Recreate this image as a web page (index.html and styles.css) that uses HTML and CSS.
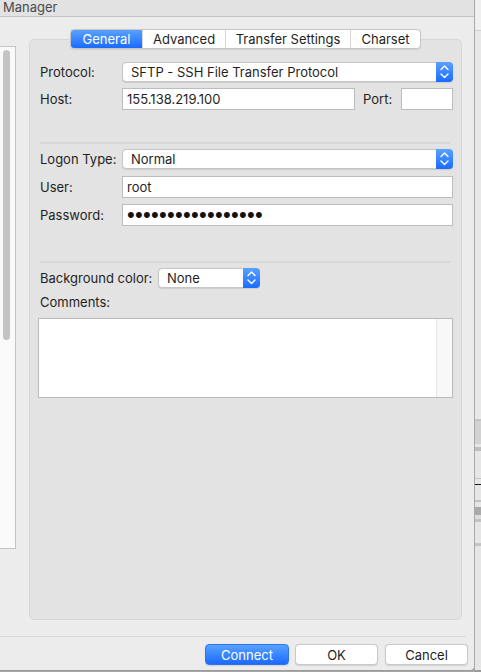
FILE: index.html
```html
<!DOCTYPE html>
<html>
<head>
<meta charset="utf-8">
<link rel="stylesheet" href="styles.css">
</head>
<body>
<div class="screen">
  <div class="window">
    <div class="titlebar">Manager</div>
    <div class="body">
      <div class="sidebar"><div class="thumb"></div></div>
      <div class="main">
        <div class="tabs">
          <span class="tab t-general active">General</span>
          <span class="tab t-advanced">Advanced</span>
          <span class="tab t-transfer">Transfer Settings</span>
          <span class="tab t-charset">Charset</span>
        </div>
        <div class="panel">
          <div class="row">
            <span class="lbl">Protocol:</span>
            <div class="select grow"><span class="sel-text">SFTP - SSH File Transfer Protocol</span><span class="arrows"><svg viewBox="0 0 17 20" width="17" height="20"><path d="M5 7.5 L8.5 4 L12 7.5 M5 12 L8.5 15.5 L12 12" fill="none" stroke="#fff" stroke-width="1.4" stroke-linecap="round" stroke-linejoin="round"/></svg></span></div>
          </div>
          <div class="row host-row">
            <span class="lbl">Host:</span>
            <div class="input host">155.138.219.100</div>
            <span class="port-lbl">Port:</span>
            <div class="input grow"></div>
          </div>
          <div class="sep"></div>
          <div class="row logon-row">
            <span class="lbl">Logon Type:</span>
            <div class="select grow"><span class="sel-text">Normal</span><span class="arrows"><svg viewBox="0 0 17 20" width="17" height="20"><path d="M5 7.5 L8.5 4 L12 7.5 M5 12 L8.5 15.5 L12 12" fill="none" stroke="#fff" stroke-width="1.4" stroke-linecap="round" stroke-linejoin="round"/></svg></span></div>
          </div>
          <div class="row user-row">
            <span class="lbl">User:</span>
            <div class="input grow">root</div>
          </div>
          <div class="row pass-row">
            <span class="lbl">Password:</span>
            <div class="input grow"><span class="dots">•••••••••••••••••</span></div>
          </div>
          <div class="sep sep2"></div>
          <div class="row bg-row">
            <span class="lbl-bg">Background color:</span>
            <div class="select bg-select"><span class="sel-text">None</span><span class="arrows"><svg viewBox="0 0 17 20" width="17" height="20"><path d="M5 7.5 L8.5 4 L12 7.5 M5 12 L8.5 15.5 L12 12" fill="none" stroke="#fff" stroke-width="1.4" stroke-linecap="round" stroke-linejoin="round"/></svg></span></div>
          </div>
          <div class="comments-lbl">Comments:</div>
          <div class="textarea"><div class="ta-text"></div><div class="ta-track"></div></div>
        </div>
      </div>
    </div>
    <div class="footer">
      <div class="footer-line"></div>
      <div class="buttons">
        <span class="btn primary">Connect</span>
        <span class="btn ok">OK</span>
        <span class="btn cancel">Cancel</span>
      </div>
    </div>
  </div>
  <div class="behind"></div>
</div>
</body>
</html>
```
FILE: styles.css
```css
* { box-sizing: border-box; }
html, body { margin: 0; padding: 0; }
body {
  width: 481px;
  height: 672px;
  overflow: hidden;
  font-family: Inter, "Liberation Sans", sans-serif;
  font-size: 13px;
  color: #1f1f1f;
  background: #a6a6a6;
}
.screen { display: flex; height: 672px; }
.window {
  width: 475px;
  height: 671px;
  flex: none;
  background: #ececec;
  border-right: 1px solid #a9a9a9;
  border-bottom: 1px solid #9a9a9a;
  border-bottom-right-radius: 5px;
  display: flex;
  flex-direction: column;
}
.titlebar {
  height: 17px;
  flex: none;
  border-bottom: 1px solid #c4c4c4;
  background: #e2e2e2;
  padding-left: 3px;
  line-height: 15px;
  color: #4a4a4a;
}
.body { display: flex; height: 619px; flex: none; }
.sidebar {
  width: 16px;
  height: 503px;
  flex: none;
  margin-top: 29px;
  background: #fafafa;
  border: 1px solid #c4c4c4;
  border-left: none;
  padding: 3px 0 0 3px;
}
.thumb { width: 7px; height: 290px; background: #c4c4c4; border-radius: 4px; }
.main {
  margin-left: 13px;
  padding-top: 12px;
  width: 433px;
  flex: none;
  display: flex;
  flex-direction: column;
}
.tabs {
  align-self: center;
  display: flex;
  height: 20px;
  border: 1px solid #c6c6c6;
  border-radius: 4px;
  background: #fff;
  margin-bottom: -10px;
  position: relative;
  z-index: 1;
  overflow: hidden;
  box-shadow: 0 0.5px 1px rgba(0,0,0,0.08);
}
.tab {
  display: flex;
  align-items: center;
  justify-content: center;
  border-left: 1px solid #d6d6d6;
  color: #1f1f1f;
}
.tab:first-child { border-left: none; }
.tab.active { background: linear-gradient(#5aa1ff, #1a6bff); color: #fff; }
.t-general { width: 71px; }
.t-advanced { width: 83px; }
.t-transfer { width: 125px; }
.t-charset { width: 70px; }
.panel {
  height: 581px;
  background: #e3e3e3;
  border: 1px solid #d7d7d7;
  border-radius: 5px;
  padding: 22px 8px 0 10px;
}
.row { display: flex; align-items: center; }
.lbl { width: 82px; flex: none; }
.grow { flex: 1; }
.select {
  height: 20px;
  background: #fff;
  border: 1px solid #c6c6c6;
  border-radius: 4px;
  display: flex;
  align-items: center;
  box-shadow: 0 0.5px 1px rgba(0,0,0,0.1);
}
.sel-text { flex: 1; padding-left: 8px; white-space: nowrap; }
.arrows {
  width: 17px;
  height: 20px;
  margin: -1px -1px -1px 0;
  background: linear-gradient(#5aa1ff, #1a6bff);
  border-radius: 0 4px 4px 0;
  display: flex;
}
.input {
  height: 22px;
  background: #fff;
  border: 1px solid #bcbcbc;
  padding-left: 4px;
  display: flex;
  align-items: center;
  white-space: nowrap;
}
.host-row { margin-top: 6px; }
.host { width: 233px; flex: none; }
.port-lbl { width: 38px; margin-left: 8px; flex: none; }
.sep { height: 2px; background: #d8d8d8; margin: 32px 3px 0 0; }
.logon-row { margin-top: 5px; }
.user-row { margin-top: 7px; }
.pass-row { margin-top: 6px; }
.sep2 { margin-top: 35px; }
.dots {
  font-family: "Liberation Sans", sans-serif;
  font-size: 22px;
  letter-spacing: 0.3px;
  line-height: 1;
  color: #111;
}
.bg-row { margin-top: 5px; }
.lbl-bg { width: 118px; flex: none; }
.bg-select { width: 102px; flex: none; }
.comments-lbl { margin-top: 6px; height: 16px; line-height: 16px; }
.textarea {
  margin: 8px 0 0 -2px;
  height: 80px;
  background: #fff;
  border: 1px solid #b9b9b9;
  display: flex;
}
.ta-text { flex: 1; }
.ta-track { width: 16px; background: #f8f8f8; border-left: 1px solid #e6e6e6; }
.footer { height: 34px; flex: none; }
.footer-line { width: 466px; height: 1px; background: #d9d9d9; }
.buttons {
  display: flex;
  justify-content: flex-end;
  padding: 7px 6px 0 0;
}
.btn {
  height: 21px;
  border-radius: 4px;
  display: flex;
  align-items: center;
  justify-content: center;
  background: #fff;
  border: 1px solid #c9c9c9;
  box-shadow: 0 0.5px 1px rgba(0,0,0,0.12);
  color: #1f1f1f;
}
.btn.primary {
  width: 84px;
  background: linear-gradient(#5aa1ff, #1a6bff);
  border-color: #2f74f2;
  color: #fff;
}
.btn.ok { width: 83px; margin-left: 6px; }
.btn.cancel { width: 83px; margin-left: 7px; }
.behind {
  flex: 1;
  height: 672px;
  background:
    linear-gradient(to bottom,
      #efefef 0, #efefef 30px, #cfcfcf 30px, #cfcfcf 31px,
      #e8e8e8 31px, #e8e8e8 419px, #c6c6c6 419px, #c6c6c6 421px,
      #d2d2d2 421px, #d2d2d2 444px, #e6e6e6 444px, #e6e6e6 447px,
      #bdbdbd 447px, #bdbdbd 451px, #e6e6e6 451px, #e6e6e6 478px,
      #c4c4c4 478px, #c4c4c4 479px, #e6e6e6 479px, #e6e6e6 484px,
      #1a1a1a 484px, #1a1a1a 485px, #e6e6e6 485px, #e6e6e6 500px,
      #c2c2c2 500px, #c2c2c2 502px, #e6e6e6 502px, #e6e6e6 507px,
      #aaaaaa 507px, #aaaaaa 515px, #dcdcdc 515px, #dcdcdc 519px,
      #c2c2c2 519px, #c2c2c2 522px, #e6e6e6 522px, #e6e6e6 543px,
      #c4c4c4 543px, #c4c4c4 546px, #e6e6e6 546px, #e6e6e6 670px,
      #9a9a9a 670px);
}
```
